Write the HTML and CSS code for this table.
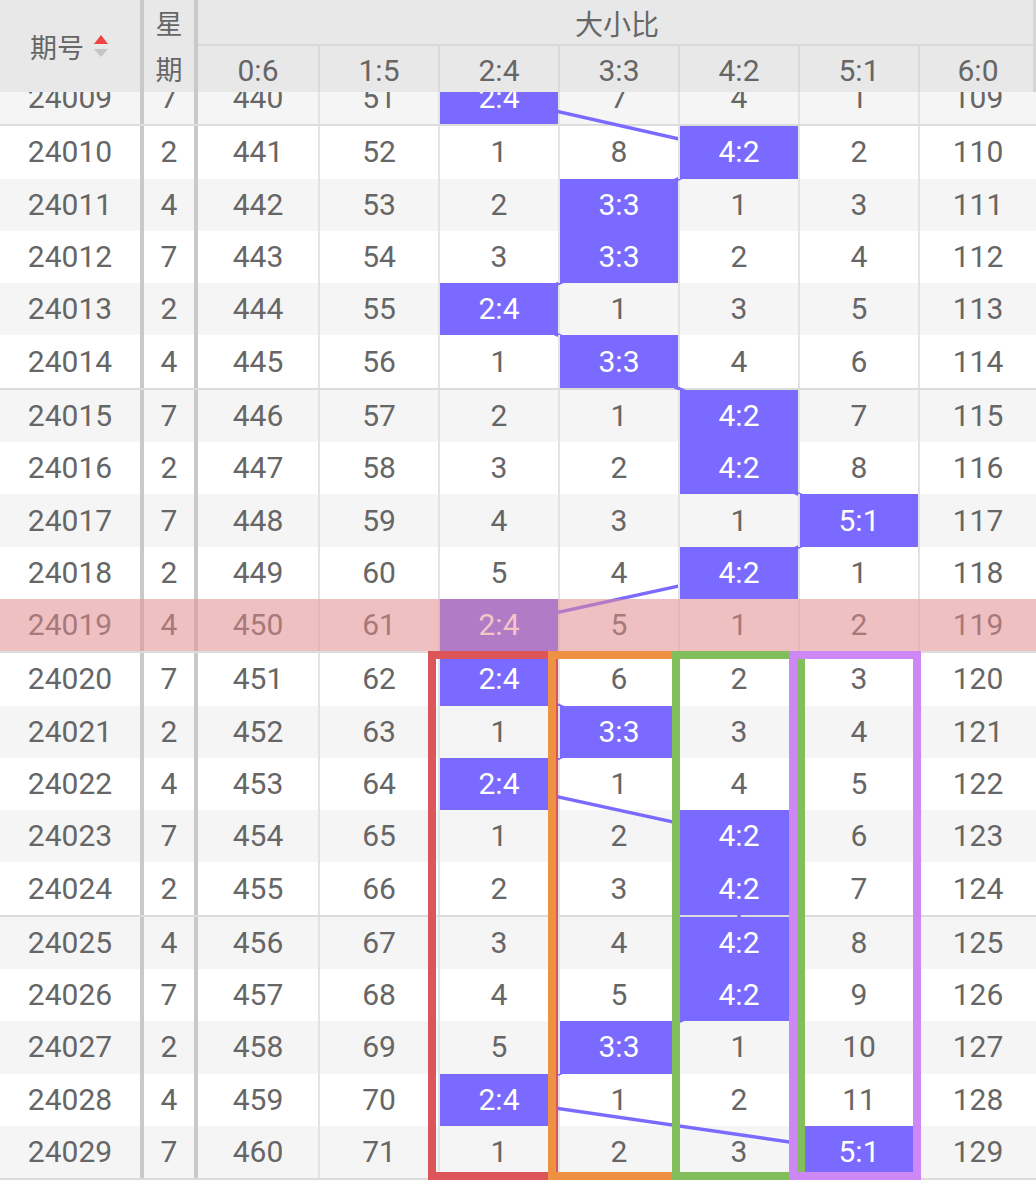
FILE: index.html
```html
<!DOCTYPE html>
<html lang="zh-CN">
<head>
<meta charset="utf-8">
<title>大小比走势</title>
<link rel="stylesheet" href="styles.css">
</head>
<body>
<div class="page">
  <div class="head">
    <div class="h-id">期号<svg class="sort" width="14" height="24" viewBox="0 0 14 24"><polygon points="0,9 7,0 14,9" fill="#ee4444"/><polygon points="0,14 14,14 7,22" fill="#c4c4c4"/></svg></div>
    <div class="hdv hdv1"></div>
    <div class="h-wk"><span>星</span><span>期</span></div>
    <div class="hdv hdv2"></div>
    <div class="h-grp">大小比</div>
    <div class="h-line"></div>
    <div class="h-n">0:6</div>
    <div class="h-n">1:5</div>
    <div class="h-n">2:4</div>
    <div class="h-n">3:3</div>
    <div class="h-n">4:2</div>
    <div class="h-n">5:1</div>
    <div class="h-n">6:0</div>
  </div>
  <div class="body">
    <div class="rows">
      <svg class="links" width="1036" height="1120" viewBox="0 0 1036 1120">
        <polyline fill="none" stroke="#7a6aff" stroke-width="3.5" points="499,26.15 739,80.45 619,132.75 619,185.05 499,237.35 619,289.65 739,343.95 739,396.25 859,448.55 739,500.85 499,553.15 499,607.45 619,659.75 499,712.05 739,764.35 739,816.65 739,870.95 739,923.25 619,975.55 499,1027.85 859,1080.15"/>
      </svg>

      <div class="row g end"><div class="c">24009</div><div class="dv"></div><div class="c">7</div><div class="dv"></div><div class="c n">440</div><div class="c n">51</div><div class="c n hit">2:4</div><div class="c n">7</div><div class="c n">4</div><div class="c n">1</div><div class="c n">109</div></div>

      <div class="row"><div class="c">24010</div><div class="dv"></div><div class="c">2</div><div class="dv"></div><div class="c n">441</div><div class="c n">52</div><div class="c n">1</div><div class="c n">8</div><div class="c n hit">4:2</div><div class="c n">2</div><div class="c n">110</div></div>
      <div class="row g"><div class="c">24011</div><div class="dv"></div><div class="c">4</div><div class="dv"></div><div class="c n">442</div><div class="c n">53</div><div class="c n">2</div><div class="c n hit">3:3</div><div class="c n">1</div><div class="c n">3</div><div class="c n">111</div></div>
      <div class="row"><div class="c">24012</div><div class="dv"></div><div class="c">7</div><div class="dv"></div><div class="c n">443</div><div class="c n">54</div><div class="c n">3</div><div class="c n hit">3:3</div><div class="c n">2</div><div class="c n">4</div><div class="c n">112</div></div>
      <div class="row g"><div class="c">24013</div><div class="dv"></div><div class="c">2</div><div class="dv"></div><div class="c n">444</div><div class="c n">55</div><div class="c n hit">2:4</div><div class="c n">1</div><div class="c n">3</div><div class="c n">5</div><div class="c n">113</div></div>
      <div class="row end"><div class="c">24014</div><div class="dv"></div><div class="c">4</div><div class="dv"></div><div class="c n">445</div><div class="c n">56</div><div class="c n">1</div><div class="c n hit">3:3</div><div class="c n">4</div><div class="c n">6</div><div class="c n">114</div></div>

      <div class="row g"><div class="c">24015</div><div class="dv"></div><div class="c">7</div><div class="dv"></div><div class="c n">446</div><div class="c n">57</div><div class="c n">2</div><div class="c n">1</div><div class="c n hit">4:2</div><div class="c n">7</div><div class="c n">115</div></div>
      <div class="row"><div class="c">24016</div><div class="dv"></div><div class="c">2</div><div class="dv"></div><div class="c n">447</div><div class="c n">58</div><div class="c n">3</div><div class="c n">2</div><div class="c n hit">4:2</div><div class="c n">8</div><div class="c n">116</div></div>
      <div class="row g"><div class="c">24017</div><div class="dv"></div><div class="c">7</div><div class="dv"></div><div class="c n">448</div><div class="c n">59</div><div class="c n">4</div><div class="c n">3</div><div class="c n">1</div><div class="c n hit">5:1</div><div class="c n">117</div></div>
      <div class="row"><div class="c">24018</div><div class="dv"></div><div class="c">2</div><div class="dv"></div><div class="c n">449</div><div class="c n">60</div><div class="c n">5</div><div class="c n">4</div><div class="c n hit">4:2</div><div class="c n">1</div><div class="c n">118</div></div>
      <div class="row g hl end"><div class="c">24019</div><div class="dv"></div><div class="c">4</div><div class="dv"></div><div class="c n">450</div><div class="c n">61</div><div class="c n hit">2:4</div><div class="c n">5</div><div class="c n">1</div><div class="c n">2</div><div class="c n">119</div></div>

      <div class="row"><div class="c">24020</div><div class="dv"></div><div class="c">7</div><div class="dv"></div><div class="c n">451</div><div class="c n">62</div><div class="c n hit">2:4</div><div class="c n">6</div><div class="c n">2</div><div class="c n">3</div><div class="c n">120</div></div>
      <div class="row g"><div class="c">24021</div><div class="dv"></div><div class="c">2</div><div class="dv"></div><div class="c n">452</div><div class="c n">63</div><div class="c n">1</div><div class="c n hit">3:3</div><div class="c n">3</div><div class="c n">4</div><div class="c n">121</div></div>
      <div class="row"><div class="c">24022</div><div class="dv"></div><div class="c">4</div><div class="dv"></div><div class="c n">453</div><div class="c n">64</div><div class="c n hit">2:4</div><div class="c n">1</div><div class="c n">4</div><div class="c n">5</div><div class="c n">122</div></div>
      <div class="row g"><div class="c">24023</div><div class="dv"></div><div class="c">7</div><div class="dv"></div><div class="c n">454</div><div class="c n">65</div><div class="c n">1</div><div class="c n">2</div><div class="c n hit">4:2</div><div class="c n">6</div><div class="c n">123</div></div>
      <div class="row end"><div class="c">24024</div><div class="dv"></div><div class="c">2</div><div class="dv"></div><div class="c n">455</div><div class="c n">66</div><div class="c n">2</div><div class="c n">3</div><div class="c n hit">4:2</div><div class="c n">7</div><div class="c n">124</div></div>

      <div class="row g"><div class="c">24025</div><div class="dv"></div><div class="c">4</div><div class="dv"></div><div class="c n">456</div><div class="c n">67</div><div class="c n">3</div><div class="c n">4</div><div class="c n hit">4:2</div><div class="c n">8</div><div class="c n">125</div></div>
      <div class="row"><div class="c">24026</div><div class="dv"></div><div class="c">7</div><div class="dv"></div><div class="c n">457</div><div class="c n">68</div><div class="c n">4</div><div class="c n">5</div><div class="c n hit">4:2</div><div class="c n">9</div><div class="c n">126</div></div>
      <div class="row g"><div class="c">24027</div><div class="dv"></div><div class="c">2</div><div class="dv"></div><div class="c n">458</div><div class="c n">69</div><div class="c n">5</div><div class="c n hit">3:3</div><div class="c n">1</div><div class="c n">10</div><div class="c n">127</div></div>
      <div class="row"><div class="c">24028</div><div class="dv"></div><div class="c">4</div><div class="dv"></div><div class="c n">459</div><div class="c n">70</div><div class="c n hit">2:4</div><div class="c n">1</div><div class="c n">2</div><div class="c n">11</div><div class="c n">128</div></div>
      <div class="row g end"><div class="c">24029</div><div class="dv"></div><div class="c">7</div><div class="dv"></div><div class="c n">460</div><div class="c n">71</div><div class="c n">1</div><div class="c n">2</div><div class="c n">3</div><div class="c n hit">5:1</div><div class="c n">129</div></div>

      <div class="box box-red"></div>
      <div class="box box-orange"></div>
      <div class="box box-green"></div>
      <div class="box box-purple"></div>
    </div>
  </div>
</div>
</body>
</html>
```

FILE: styles.css
```css
html, body {
  margin: 0;
  padding: 0;
  background: #ffffff;
}

body {
  width: 1036px;
  height: 1180px;
  overflow: hidden;
  font-family: Roboto, "Noto Sans CJK SC", sans-serif;
  color: #666666;
}

.page {
  width: 1036px;
  height: 1180px;
  overflow: hidden;
}

/* ---------- header ---------- */
.head {
  display: grid;
  grid-template-columns: 140px 4px 50px 4px repeat(6, 120px) 118px;
  grid-template-rows: 44px 2px 46px;
  height: 92px;
  background: #e8e8e8;
  box-shadow: inset -3px 0 0 #d6d6d6;
  font-size: 27px;
}

.h-id {
  grid-column: 1;
  grid-row: 1 / 4;
  display: flex;
  align-items: center;
  justify-content: center;
  gap: 10px;
  padding-right: 2px;
}

.sort {
  display: block;
  margin-top: 2px;
}

.hdv {
  grid-row: 1 / 4;
  background: #c9c9c9;
}
.hdv1 { grid-column: 2; }
.hdv2 { grid-column: 4; }

.h-wk {
  grid-column: 3;
  grid-row: 1 / 4;
  display: grid;
  grid-template-rows: 44px 48px;
  place-items: center;
}

.h-grp {
  grid-column: 5 / 12;
  grid-row: 1;
  display: flex;
  align-items: center;
  justify-content: center;
  font-size: 28px;
  padding-top: 2px;
}

.h-line {
  grid-column: 5 / 12;
  grid-row: 2;
  background: #d9d9d9;
}

.h-n {
  grid-row: 3;
  display: flex;
  align-items: center;
  justify-content: center;
  font-size: 30px;
  padding-top: 2px;
}
.h-n + .h-n {
  border-left: 2px solid #dadada;
}

/* ---------- body ---------- */
.body {
  height: 1088px;
  overflow: hidden;
}

.rows {
  position: relative;
  margin-top: -20px;
}

.row {
  display: grid;
  grid-template-columns: 140px 4px 50px 4px repeat(6, 120px) 118px;
  height: 52.3px;
  background: #ffffff;
  font-size: 30px;
}
.row.g {
  background: #f5f5f5;
}
.row.end {
  border-bottom: 2px solid #dcdcdc;
}

.c {
  display: flex;
  align-items: center;
  justify-content: center;
  line-height: 1;
}

.dv {
  background: #c9c9c9;
}

.n + .n {
  border-left: 2px solid #e3e3e3;
}

.hit {
  position: relative;
  z-index: 2;
  background: #7a6aff;
  color: #ffffff;
}

.links {
  position: absolute;
  left: 0;
  top: 0;
  z-index: 1;
  pointer-events: none;
}

.row.hl {
  position: relative;
}
.row.hl::after {
  content: "";
  position: absolute;
  left: 0;
  top: 0;
  right: 0;
  bottom: 0;
  background: rgba(233, 139, 141, 0.5);
  z-index: 3;
}

/* ---------- colored frames ---------- */
.box {
  position: absolute;
  top: 579px;
  height: 529px;
  box-sizing: border-box;
  border: 8px solid;
  z-index: 4;
}
.box-red { left: 428px; width: 130px; border-color: #dc5558; }
.box-orange { left: 548px; width: 132px; border-color: #ee9142; }
.box-green { left: 672px; width: 133px; border-color: #82bf5c; }
.box-purple { left: 789px; width: 132px; border-color: #cd88f5; }
```
